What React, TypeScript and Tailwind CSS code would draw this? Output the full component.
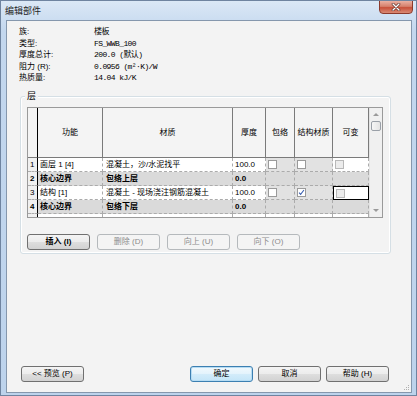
const info = [
  { label: "族:", value: "楼板" },
  { label: "类型:", value: "FS_WWB_100" },
  { label: "厚度总计:", value: "200.0 (默认)" },
  { label: "阻力 (R):", value: "0.0956 (m²·K)/W" },
  { label: "热质量:", value: "14.04 kJ/K" },
];

const heads = ["功能", "材质", "厚度", "包络", "结构材质", "可变"];

type Row = { n: string; fn: string; mat: string; th: string; core?: boolean; struct?: boolean; focus?: boolean };

const rows: Row[] = [
  { n: "1", fn: "面层 1 [4]", mat: "混凝土，沙/水泥找平", th: "100.0" },
  { n: "2", fn: "核心边界", mat: "包络上层", th: "0.0", core: true },
  { n: "3", fn: "结构 [1]", mat: "混凝土 - 现场浇注钢筋混凝土", th: "100.0", struct: true, focus: true },
  { n: "4", fn: "核心边界", mat: "包络下层", th: "0.0", core: true },
];

const cols = "grid grid-cols-[10px_65px_130px_33px_29px_38px_36px]";
const cell = "border-r border-b border-dashed border-[#ababab] overflow-hidden whitespace-nowrap";

function Check({ checked = false, disabled = false }: { checked?: boolean; disabled?: boolean }) {
  return (
    <span
      className={
        disabled
          ? "ml-[2px] mt-[2px] flex h-[9px] w-[9px] border border-[#b8b8b8] bg-[#ececec]"
          : "ml-[2px] mt-[2px] flex h-[9px] w-[9px] items-center justify-center border border-[#9a9a9a] bg-white"
      }
    >
      {checked ? (
        <svg viewBox="0 0 8 8" className="h-[7px] w-[7px]">
          <path d="M1.2 4.2 L3 6.2 L6.8 1.2" fill="none" stroke="#3a5fb0" strokeWidth="1.2" />
        </svg>
      ) : null}
    </span>
  );
}

function Btn({ children, disabled = false, primary = false, bold = false }: { children: React.ReactNode; disabled?: boolean; primary?: boolean; bold?: boolean }) {
  const base = "flex h-[16px] w-[63px] items-center justify-center rounded-[3px] border text-[8px] leading-[10px]";
  if (disabled) return <div className={`${base} border-[#b5b9bc] bg-[#f4f4f4] text-[#8c8c8c]`}>{children}</div>;
  if (primary)
    return (
      <div className={`${base} border-[#3c7fb1] bg-[linear-gradient(#f2f9fd,#e3f3fc_50%,#d3ecfa_51%,#c4e5f8)] shadow-[inset_0_0_0_1px_#b6dcf3]`}>
        {children}
      </div>
    );
  return (
    <div className={`${base} border-[#707070] bg-[linear-gradient(#f4f4f4,#ececec_50%,#dedede_51%,#d2d2d2)] ${bold ? "font-bold" : ""}`}>
      {children}
    </div>
  );
}

export default function App() {
  return (
    <div className="flex h-[396px] w-[417px] flex-col overflow-hidden border border-[#6f84a0] bg-[linear-gradient(#dbe8f6,#c3d7ee_30px,#bdd3ec)] font-['Liberation_Sans','Noto_Sans_CJK_SC',sans-serif] text-black">
      <div className="relative flex h-[19px] shrink-0 items-center">
        <span className="ml-[4px] mt-[1px] text-[9px] leading-[12px] text-[#1e1e1e]">编辑部件</span>
        <div className="absolute right-[3px] top-[-1px] flex h-[14px] w-[34px] items-center justify-center rounded-b-[4px] border border-[#8c3a2c] bg-[linear-gradient(#eab0a2,#d6806c_45%,#c8503a_55%,#d98a74)]">
          <svg viewBox="0 0 10 8" className="h-[8px] w-[10px]">
            <path d="M2 1 L8 7 M8 1 L2 7" stroke="#5a2a22" strokeWidth="2.6" strokeLinecap="round" />
            <path d="M2 1 L8 7 M8 1 L2 7" stroke="#ffffff" strokeWidth="1.4" strokeLinecap="round" />
          </svg>
        </div>
      </div>

      <div className="relative mb-[2px] ml-[5px] mr-[4px] flex flex-1 flex-col border border-[#8597ad] bg-[#f3f3f3]">
        <div className="flex h-[75px] shrink-0 flex-col pl-[12px] pt-[5px]">
          {info.map((r) => (
            <div key={r.label} className="flex h-[11.5px] items-center text-[8px] leading-[11px]">
              <span className="w-[75px] shrink-0">{r.label}</span>
              <span className="font-['Liberation_Mono','Noto_Sans_CJK_SC',monospace] tracking-[-0.6px]">{r.value}</span>
            </div>
          ))}
        </div>

        <div className="relative ml-[13px] flex h-[158px] w-[371px] flex-col rounded-[3px] border border-[#d5dfe5] pl-[6px] pt-[10px] shadow-[inset_0_0_0_1px_#ffffff]">
          <span className="absolute left-[4px] top-[-7px] bg-[#f3f3f3] px-[2px] text-[9px] leading-[12px]">层</span>

          <div className="flex h-[111px] w-[356px] overflow-hidden border border-[#9a9a9a] bg-white text-[8px] leading-[13px]">
            <div className="flex w-[341px] flex-col">
              <div className={`${cols} h-[50px] shrink-0 bg-[#f4f4f4]`}>
                <div className="border-b border-r border-b-[#7a7a7a] border-r-black" />
                {heads.map((h) => (
                  <div key={h} className="flex items-center justify-center border-b border-r border-[#7a7a7a]">
                    {h}
                  </div>
                ))}
              </div>
              {[...rows, null].map((r, i) => {
                const bg = r?.core ? "bg-[#dadada]" : "";
                const grey = r && !r.core ? "bg-[#e2e2e2]" : "";
                return (
                  <div key={i} className={`${cols} h-[14px] shrink-0 ${bg} ${r?.core ? "font-bold" : ""}`}>
                    <div className={`${cell} bg-[#f0f0f0] pl-[2px] [border-right-style:solid] border-r-black ${r?.core ? "bg-[#dadada]" : ""}`}>{r?.n}</div>
                    <div className={`${cell} pl-[2px]`}>{r?.fn}</div>
                    <div className={`${cell} pl-[3px]`}>{r?.mat}</div>
                    <div className={`${cell} pl-[2px]`}>{r?.th}</div>
                    <div className={`${cell} ${grey}`}>{r && !r.core ? <Check /> : null}</div>
                    <div className={`${cell} ${grey}`}>{r && !r.core ? <Check checked={r.struct} /> : null}</div>
                    <div className={r?.focus ? "border border-black" : cell}>{r && !r.core ? <Check disabled /> : null}</div>
                  </div>
                );
              })}
            </div>
            <div className="flex w-[14px] flex-col border-l border-[#e3e3e3] bg-[#f0f0f0]">
              <div className="flex h-[13px] items-center justify-center">
                <svg viewBox="0 0 6 3" className="h-[3px] w-[6px]">
                  <path d="M0 3 L3 0 L6 3 Z" fill="#9a9a9a" />
                </svg>
              </div>
              <div className="mx-[1px] h-[10px] rounded-[2px] border border-[#9aa0a8] bg-[linear-gradient(90deg,#f6f6f6,#e4e4e4)]" />
              <div className="flex-1" />
              <div className="flex h-[13px] items-center justify-center">
                <svg viewBox="0 0 6 3" className="h-[3px] w-[6px]">
                  <path d="M0 0 L3 3 L6 0 Z" fill="#9a9a9a" />
                </svg>
              </div>
            </div>
          </div>

          <div className="mt-[16px] flex gap-[7px]">
            <Btn bold>插入 (I)</Btn>
            <Btn disabled>删除 (D)</Btn>
            <Btn disabled>向上 (U)</Btn>
            <Btn disabled>向下 (O)</Btn>
          </div>
        </div>

        <div className="mb-[10px] ml-[14px] mr-[22px] mt-auto flex items-center">
          <Btn>&lt;&lt; 预览 (P)</Btn>
          <div className="ml-auto flex gap-[5px]">
            <Btn primary>确定</Btn>
            <Btn>取消</Btn>
            <Btn>帮助 (H)</Btn>
          </div>
        </div>

        {/* size grip */}
        <svg viewBox="0 0 6 6" className="absolute bottom-[1px] right-[1px] h-[6px] w-[6px]">
          <rect x="4" y="0" width="1" height="1" fill="#b0b0b0" />
          <rect x="2" y="2" width="1" height="1" fill="#b0b0b0" />
          <rect x="4" y="2" width="1" height="1" fill="#b0b0b0" />
          <rect x="0" y="4" width="1" height="1" fill="#b0b0b0" />
          <rect x="2" y="4" width="1" height="1" fill="#b0b0b0" />
          <rect x="4" y="4" width="1" height="1" fill="#b0b0b0" />
        </svg>
      </div>
    </div>
  );
}
